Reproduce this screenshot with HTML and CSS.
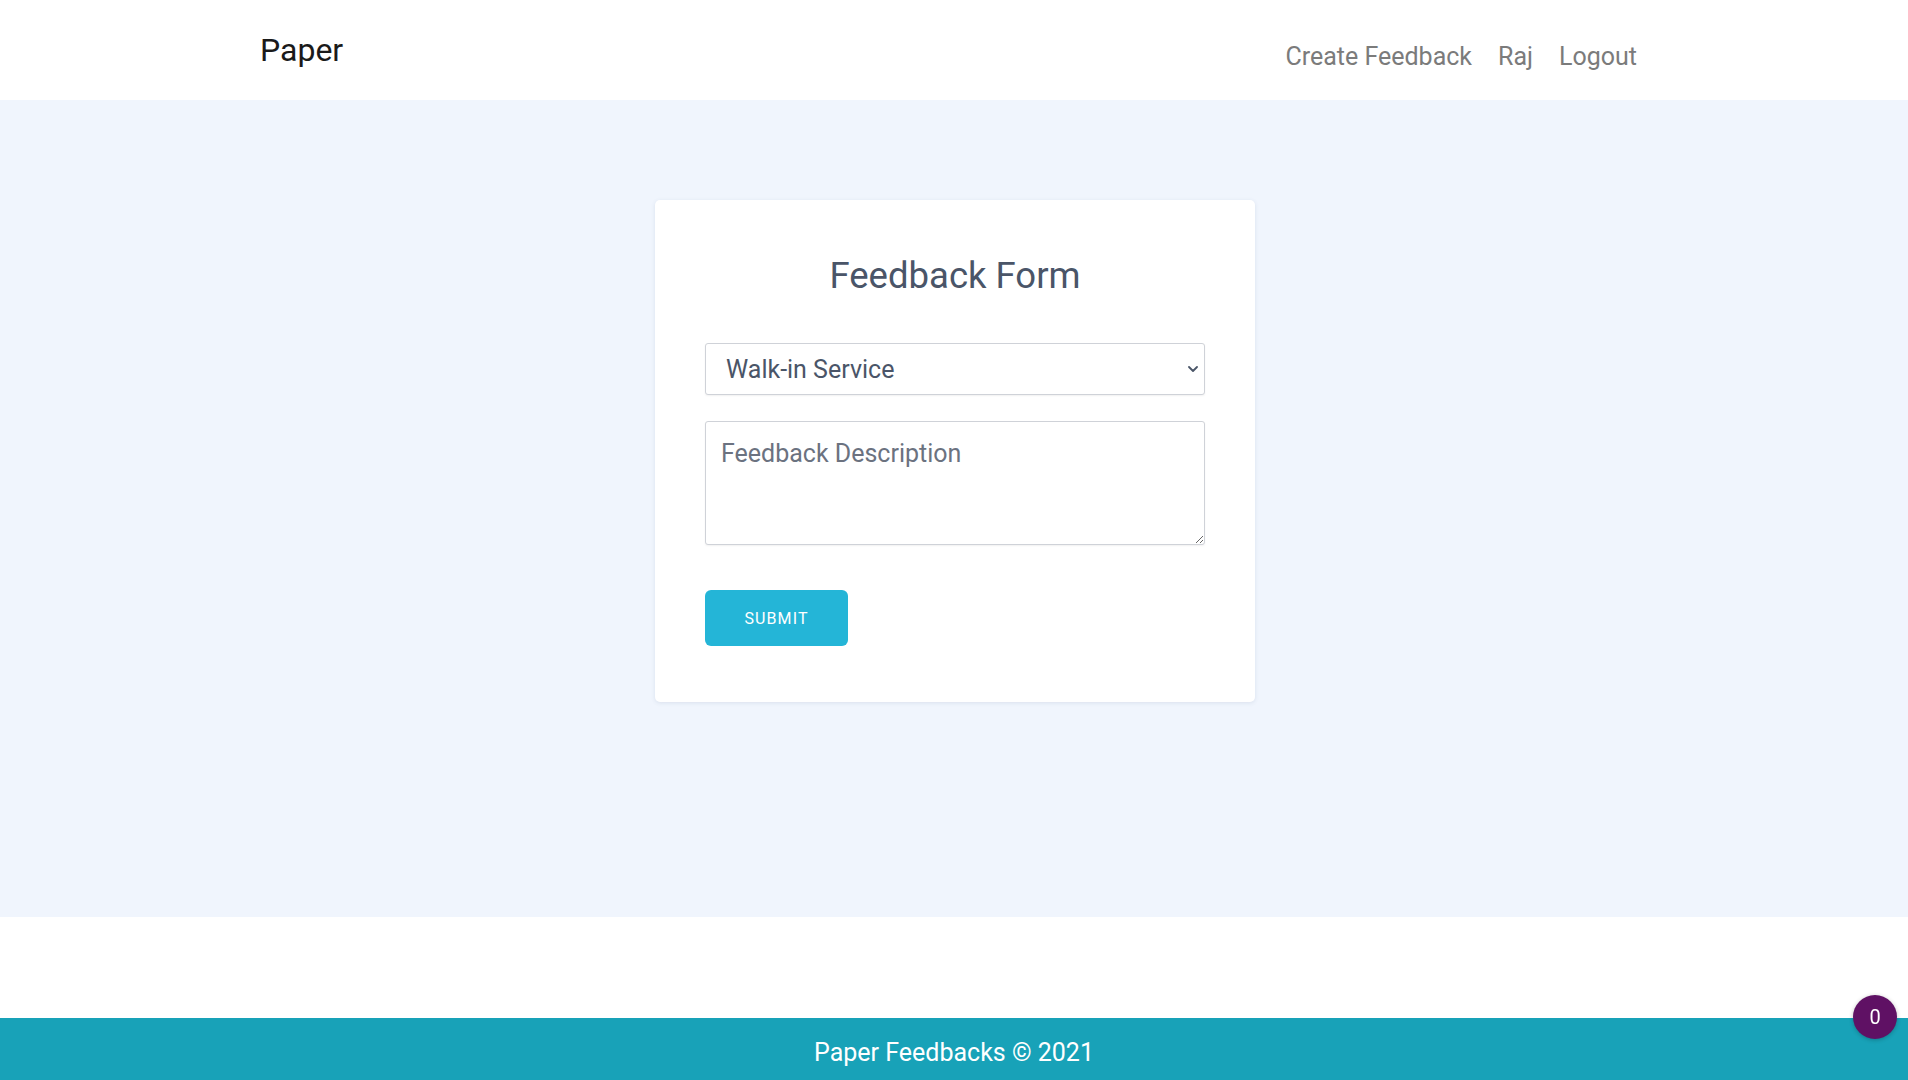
FILE: index.html
```html
<!DOCTYPE html>
<html lang="en">
<head>
<meta charset="utf-8">
<title>Paper</title>
<link rel="stylesheet" href="styles.css">
</head>
<body>
<header class="topbar">
  <div class="topbar-inner">
    <a class="brand" href="#">Paper</a>
    <nav class="nav">
      <a href="#">Create Feedback</a>
      <a href="#">Raj</a>
      <a href="#">Logout</a>
    </nav>
  </div>
</header>
<main class="main">
  <form class="card">
    <h2 class="title">Feedback Form</h2>
    <div class="select-wrap">
      <select class="field select">
        <option>Walk-in Service</option>
        <option>Online Service</option>
      </select>
      <svg class="chevron" width="10" height="6" viewBox="0 0 10 6"><path d="M1 1l4 4 4-4" fill="none" stroke="#4a5568" stroke-width="1.8" stroke-linecap="round" stroke-linejoin="round"/></svg>
    </div>
    <textarea class="field textarea" placeholder="Feedback Description"></textarea>
    <button type="button" class="btn">SUBMIT</button>
  </form>
</main>
<div class="spacer"></div>
<footer class="footer">Paper Feedbacks © 2021</footer>
<div class="badge">0</div>
</body>
</html>
```
FILE: styles.css
```css
* { box-sizing: border-box; }
html, body { margin: 0; padding: 0; }
body {
  font-family: Roboto, "Liberation Sans", sans-serif;
  background: #fff;
  overflow: hidden;
}
a { text-decoration: none; }

.topbar { height: 100px; background: #fff; }
.topbar-inner {
  width: 1400px;
  margin: 0 auto;
  height: 100%;
  display: flex;
  align-items: center;
  justify-content: space-between;
  padding: 0 4px 0 6px;
}
.brand {
  font-size: 32px;
  color: #1a1a1a;
  margin-top: -1px;
}
.nav {
  display: flex;
  margin-top: 12px;
}
.nav a {
  font-size: 25px;
  color: #7b7b7b;
  padding: 0 13px;
}

.main {
  height: 817px;
  background: #f0f5fd;
  padding-top: 100px;
}
.card {
  width: 600px;
  margin: 0 auto;
  position: relative;
  left: 1px;
  background: #fff;
  border-radius: 5px;
  box-shadow: 0 1px 4px rgba(60, 80, 120, 0.12);
  padding: 50px 50px 56px;
  display: flex;
  flex-direction: column;
}
.title {
  margin: 0 0 41px;
  text-align: center;
  font-size: 36.5px;
  line-height: 52px;
  font-weight: 400;
  color: #4a5568;
}
.select-wrap { position: relative; }
.field {
  display: block;
  width: 100%;
  border: 1px solid #cfd2d8;
  border-radius: 3px;
  background: #fff;
  box-shadow: 0 1px 2px rgba(0, 0, 0, 0.06);
  font-family: Roboto, "Liberation Sans", sans-serif;
  font-size: 25px;
  color: #4a5568;
  outline: none;
}
.select {
  height: 52px;
  padding: 0 30px 0 20px;
  appearance: none;
  -webkit-appearance: none;
}
.chevron {
  position: absolute;
  right: 7px;
  top: 23px;
  pointer-events: none;
}
.textarea {
  margin-top: 26px;
  height: 124px;
  padding: 13px 15px;
  line-height: 1.5;
  resize: vertical;
}
.textarea::placeholder { color: #6b7280; }
.btn {
  margin-top: 45px;
  align-self: flex-start;
  width: 143px;
  height: 56px;
  border: 0;
  border-radius: 6px;
  background: #24b5d7;
  color: #fff;
  font-family: Roboto, "Liberation Sans", sans-serif;
  font-size: 16px;
  font-weight: 400;
  letter-spacing: 0.07em;
}

.spacer { height: 101px; background: #fff; }
.footer {
  height: 62px;
  background: #18a2b8;
  color: #fff;
  text-align: center;
  font-size: 25px;
  line-height: 30px;
  padding-top: 20px;
}
.badge {
  position: fixed;
  right: 11px;
  bottom: 41px;
  width: 44px;
  height: 44px;
  border-radius: 50%;
  background: #5f1164;
  color: #fff;
  font-size: 20px;
  display: flex;
  align-items: center;
  justify-content: center;
  box-shadow: 0 1px 4px rgba(0, 0, 0, 0.25);
}
```
